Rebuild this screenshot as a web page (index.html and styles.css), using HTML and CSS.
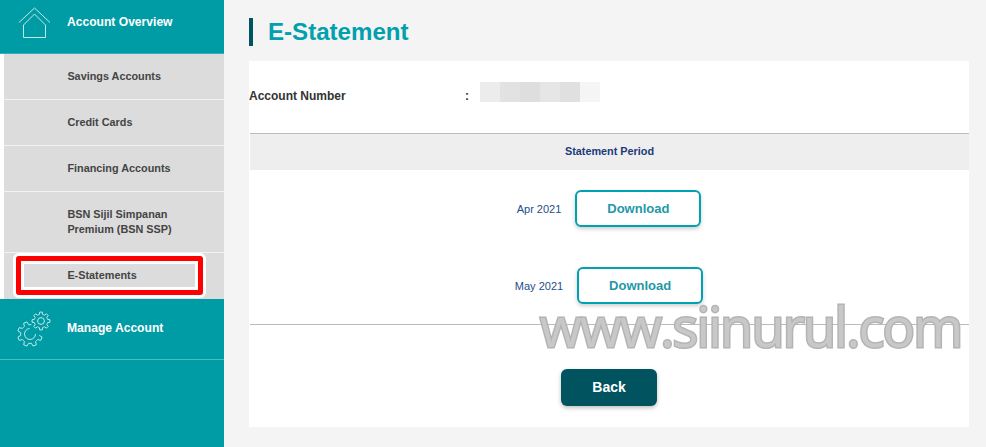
FILE: index.html
```html
<!DOCTYPE html>
<html lang="en">
<head>
<meta charset="utf-8">
<title>E-Statement</title>
<link rel="stylesheet" href="styles.css">
</head>
<body>
<div class="page">
  <aside class="sidebar">
    <a class="nav-head nav-overview">
      <svg class="nav-icon icon-home" viewBox="0 0 34 32" fill="none" stroke="currentColor" stroke-width="1">
        <path d="M1 15.500 16.500 1 32 15.500"/>
        <path d="M5.500 18 16.500 7 27.500 18V30.500H5.500V18"/>
      </svg>
      <span>Account Overview</span>
    </a>
    <ul class="subnav">
      <li class="sub-item">Savings Accounts</li>
      <li class="sub-item">Credit Cards</li>
      <li class="sub-item">Financing Accounts</li>
      <li class="sub-item sub-tall">BSN Sijil Simpanan<br>Premium (BSN SSP)</li>
      <li class="sub-item sub-current"><span class="highlight"></span><span class="sub-label">E-Statements</span></li>
    </ul>
    <a class="nav-head nav-manage">
      <svg class="nav-icon icon-gears" viewBox="0 0 36 38" fill="none" stroke="currentColor" stroke-width="1">
        <defs>
          <path id="tooth" vector-effect="non-scaling-stroke" d="M-1.810-7.280L-1.390-9.900H1.390L1.810-7.280A7.500 7.500 0 0 1 3.860-6.430"/>
        </defs>
        <g transform="translate(25 12) scale(.9)">
          <use href="#tooth"/><use href="#tooth" transform="rotate(45)"/><use href="#tooth" transform="rotate(90)"/><use href="#tooth" transform="rotate(135)"/><use href="#tooth" transform="rotate(180)"/><use href="#tooth" transform="rotate(225)"/><use href="#tooth" transform="rotate(270)"/><use href="#tooth" transform="rotate(315)"/>
          <circle r="3.800" vector-effect="non-scaling-stroke"/>
        </g>
        <g transform="translate(14 25) scale(1.250)">
          <use href="#tooth" transform="rotate(112.500)"/><use href="#tooth" transform="rotate(157.500)"/><use href="#tooth" transform="rotate(202.500)"/><use href="#tooth" transform="rotate(247.500)"/><use href="#tooth" transform="rotate(292.500)"/><use href="#tooth" transform="rotate(337.500)"/>
        </g>
        <path d="M19.500 25a5.500 5.500 0 1 1-6-5.500"/>
      </svg>
      <span>Manage Account</span>
    </a>
  </aside>
  <main class="main">
    <h1 class="title">E-Statement</h1>
    <section class="card">
      <div class="account-row">
        <span class="account-label">Account Number</span>
        <span class="account-colon">:</span>
        <span class="mask">
          <i class="m1"></i><i class="m2"></i><i class="m3"></i><i class="m4"></i><i class="m5"></i><i class="m6"></i>
        </span>
      </div>
      <div class="period-head">Statement Period</div>
      <div class="period-row row-first">
        <span class="period">Apr 2021</span>
        <button class="download">Download</button>
      </div>
      <div class="period-row row-second">
        <span class="period">May 2021</span>
        <button class="download">Download</button>
      </div>
      <div class="actions">
        <button class="back">Back</button>
      </div>
    </section>
  </main>
  <div class="watermark">www.siinurul.com</div>
</div>
</body>
</html>
```
FILE: styles.css
```css
* { box-sizing: border-box; }
html, body { margin: 0; height: 100%; }
body { background: #f4f4f4; font-family: "Liberation Sans", Arial, sans-serif; overflow: hidden; }
.page { position: relative; display: flex; width: 986px; height: 447px; }

.sidebar { width: 224px; flex: none; background: #009ca6; color: #fff; display: flex; flex-direction: column; }
.nav-head { display: flex; align-items: center; font-size: 12.100px; font-weight: bold; color: #fff; }
.nav-head span { margin-left: 15px; }
.nav-icon { flex: none; align-self: flex-start; color: #c4e8ea; }
.nav-overview { height: 54px; padding: 0 0 9px 18px; border-bottom: 1px solid #33b0b8; }
.icon-home { width: 34px; height: 32px; margin-top: 7px; }
.nav-manage { height: 61px; padding: 0 0 3px 16px; border-bottom: 1px solid #4dbac1; }
.icon-gears { width: 36px; height: 38px; margin-top: 10px; }

.subnav { list-style: none; margin: 0; padding: 0 0 0 4px; background: #fff; }
.sub-item { position: relative; display: flex; align-items: center; height: 46px; padding-left: 63.400px; background: #dcdcdc; border-bottom: 1px solid #f2f2f2; color: #444; font-size: 10.850px; font-weight: bold; line-height: 15px; }
.sub-tall { height: 61px; }
.sub-current { border-bottom: 0; }
.sub-label { position: relative; margin-top: -2px; }
.highlight { position: absolute; left: 9px; top: 0; width: 193px; height: 45px; border: 3px solid #fff; border-radius: 6px; }
.highlight::before { content: ""; position: absolute; inset: 0; border: 5px solid #f00; border-radius: 3px; }
.highlight::after { content: ""; position: absolute; inset: 5px; border: 3px solid #fff; }

.main { flex: 1; padding: 18px 17px 20px 25px; display: flex; flex-direction: column; }
.title { margin: 0 0 15px; height: 28px; border-left: 4px solid #00535f; padding-left: 15px; color: #00a0ae; font-size: 24.100px; line-height: 28px; font-weight: bold; }
.card { flex: 1; background: #fff; display: flex; flex-direction: column; }
.account-row { height: 72px; padding-bottom: 2px; display: flex; align-items: center; font-size: 12px; font-weight: bold; color: #333; }
.account-label { width: 216px; }
.account-colon { width: 15px; }
.mask { display: flex; align-self: flex-start; margin-top: 21px; }
.mask i { display: block; width: 20px; height: 20px; }
.m1 { background: #ececec; }
.m2 { background: #e2e2e2; }
.m3 { background: #dedede; }
.m4 { background: #e6e6e6; }
.m5 { background: #e0e0e0; }
.m6 { background: #f5f5f5; }

.period-head { height: 37px; margin-left: 1px; padding-bottom: 2px; background: #eee; border-top: 1px solid #bbb; display: flex; align-items: center; justify-content: center; font-size: 10.850px; font-weight: bold; color: #1d3b7a; }
.period-row { display: flex; align-items: center; justify-content: center; gap: 14px; height: 37px; }
.row-first { margin-top: 20px; }
.row-second { margin-top: 40px; }
.period { font-size: 11px; color: #1d4e89; }
.download { width: 126px; height: 37px; padding: 0 0 1px; background: #fff; border: 2px solid #00a2b1; border-radius: 6px; box-shadow: 0 2px 4px rgba(0,0,0,.2); color: #1f98a8; font-family: inherit; font-size: 13px; font-weight: bold; }
.actions { margin-top: 20px; margin-left: 1px; padding: 44px 1px 0 0; border-top: 1px solid #bbb; display: flex; justify-content: center; }
.back { width: 96px; height: 37px; padding: 0 0 2px; background: #00535f; border: 0; border-radius: 6px; box-shadow: 0 2px 4px rgba(0,0,0,.25); color: #fff; font-family: inherit; font-size: 14px; font-weight: bold; }

.watermark { position: absolute; left: 540px; top: 306px; font-family: "Open Sans", sans-serif; font-size: 54px; letter-spacing: -1.800px; line-height: 40px; white-space: nowrap; color: #c8c8c8; -webkit-text-stroke: 3px #b4b4b4; paint-order: stroke fill; }
```
